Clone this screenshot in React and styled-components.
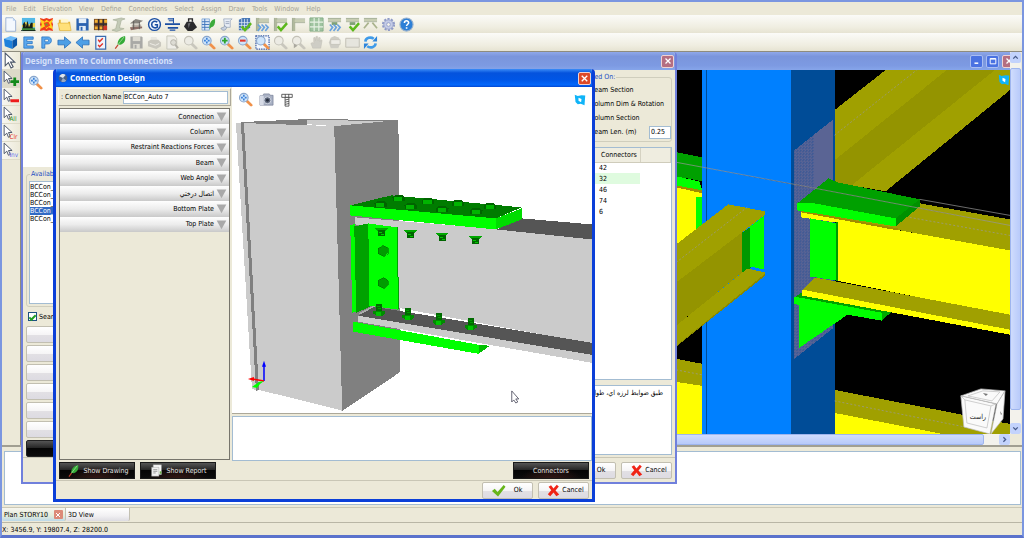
/*
 *
 * Connection designer workspace
 *
 */

import React from 'react';
import styled, { createGlobalStyle, css } from 'styled-components';

const GlobalStyle = createGlobalStyle`
  * {
    box-sizing: border-box;
  }
  body {
    margin: 0;
    color: #000;
    font: 7px/8px "DejaVu Sans Condensed", "Noto Sans", "DejaVu Sans", sans-serif;
  }
  button, input, textarea, table {
    font: inherit;
    color: inherit;
  }
`;

const MENU = ['File', 'Edit', 'Elevation', 'View', 'Define', 'Connections', 'Select', 'Assign', 'Draw', 'Tools', 'Window', 'Help'];

const FILE_TOOLS = [
  'new', 'city', 'map', 'open', 'save', 'stack', 'section', 'steel', 'grade', 'level', 'weight', 'export',
  'report', 'gridCheck', 'frameLoad', 'frameCheck', 'frame', 'mesh', 'jointLoad', 'jointCheck', 'joint', 'gear', 'help',
];

const VIEW_TOOLS = [
  'cube', 'letterE', 'letterP', 'next', 'prev', 'checklist', 'feather', 'saveGray', 'printGray', 'previewGray',
  'findGray', 'zoomAll', 'zoomIn', 'zoomOut', 'zoomWindow', 'findGray', 'zoomPrev', 'hand', 'handBox', 'box', 'refresh',
];

const POINTERS = ['pick', 'pickAdd', 'pickRemove', 'pickAll', 'pickClear', 'pickInvert'];

const SECTIONS = ['Connection', 'Column', 'Restraint Reactions Forces', 'Beam', 'Web Angle', 'اتصال درختي', 'Bottom Plate', 'Top Plate'];

const CONNECTORS = [42, 32, 46, 74, 6];

const lens = (fill, stroke, handle, mark) => (
  <g>
    <path d="M9.5 9.5l4.5 4.5" stroke={handle} strokeWidth="3" strokeLinecap="round" />
    <circle cx="6.2" cy="6" r="4.6" fill={fill} stroke={stroke} strokeWidth="1.2" />
    {mark}
  </g>
);
const blueLens = (mark) => lens('#cfe5fb', '#8aa6cc', '#f0914a', mark);
const grayLens = (mark) => lens('#ecebe4', '#c4c2b8', '#c9c7bd', mark);
const floppy = (body, label) => (
  <g>
    <path d="M1.5 1.5h12l1 1v12h-13z" fill={body} />
    <path d="M4 1.5h8v5H4z" fill={label} />
    <path d="M4.5 9.5h7v5h-7z" fill={label} />
    <path d="M6 10.5h2v4H6z" fill={body} />
  </g>
);
const check = <path d="M5 10l3.5 4L15 6.5" fill="none" stroke="#5cb81c" strokeWidth="2.6" />;
const frameBase = (
  <g>
    <path d="M3 1v14" stroke="#b1b99d" strokeWidth="3" />
    <path d="M4 4h11" stroke="#c7cdb2" strokeWidth="3" />
    <path d="M4 2h11M4 6h11M1.5 1v14" stroke="#8d987f" strokeWidth="0.7" />
  </g>
);
const jointBase = (
  <g>
    <path d="M1 3h14" stroke="#c7cdb2" strokeWidth="3" />
    <path d="M1 1.5h14M1 5h14" stroke="#8d987f" strokeWidth="0.7" />
    <path d="M5 5.5h6v3H5z" fill="#7fa276" />
  </g>
);
const waves = <path d="M3 8l3 3-3 4M7 8l3 3-3 4M11 8l3 3-3 4" fill="none" stroke="#69a2dd" strokeWidth="1.8" />;
const arrow = <path d="M3 1v12l3-3 2.5 5 2-1-2.5-4.500h4z" fill="#fff" stroke="#4a5568" strokeWidth="1" />;
const smallArrow = <path d="M2 1v10l2.500-2.400 1.600 3.900 1.700-.8-1.700-3.700h3.400z" fill="#fff" stroke="#4a5568" strokeWidth="0.9" />;
const iconText = (label, fill) => (
  <text x="7" y="14" fontSize="6" fill={fill}>{label}</text>
);

const DRAWINGS = {
  new: (
    <g>
      <path d="M3 .8h7.500l3 3.200v11.200H3z" fill="#f3f8fe" stroke="#8fa9cf" strokeWidth="0.9" />
      <path d="M10.500.8V4h3z" fill="#bcd3f0" />
    </g>
  ),
  city: (
    <g>
      <path d="M1 1h14v14H1z" fill="#53b9e6" />
      <path d="M1 9l4-4 3 3 7-2v5H1z" fill="#f0d44a" />
      <path d="M0 14h2V8l1.500-3L5 8v3l2-7 1.500 7 2-5h2v6l3 2v1H0z" fill="#152018" />
      <path d="M1 12h14v2H1z" fill="#3f8b3a" />
    </g>
  ),
  map: (
    <g>
      <path d="M1 1l4 1 3-1 3 1 4-1-1 4 1 3-1 4 1 3-4-1-3 1-3-1-4 1 1-4-1-3 1-4z" fill="#ef3b1d" />
      <path d="M1 2l5 3 2-2 3 2 4-3-2 5 2 6-5-2-2 2-2-3-5 3 2-5z" fill="#ffd21c" />
      <path d="M5 6l5-1 2 4-5 3z" fill="#f4441c" />
      <path d="M7 7h2v2H7z" fill="#4fae3d" />
    </g>
  ),
  open: (
    <g>
      <path d="M2 3h5l1.500 2H14v9H2z" fill="#e7b93c" />
      <path d="M4 1.500l8 1V9H4z" fill="#fff6cf" />
      <path d="M1 6.500h12.500l1.500 8H3z" fill="#ffe07a" stroke="#d9a72f" strokeWidth="0.6" />
    </g>
  ),
  save: floppy('#2b62b0', '#e3edf8'),
  stack: (
    <g>
      <path d="M1 2h14v12H1z" fill="#7b4d25" />
      <path d="M2 3h3v3H2zM7 3h3v3H7zM12 3h3v3h-3zM2 10h3v3H2zM7 10h3v3H7z" fill="#f4b234" />
      <path d="M1 7.500h14M6 2v12M11 2v12" stroke="#2f2a33" strokeWidth="1.300" />
      <path d="M11 9.500h4V14h-4z" fill="#d3382b" />
    </g>
  ),
  section: (
    <g>
      <path d="M2 3l9-2 4 1-4 1.500-2 8 5 1-8 3-5-1.500 4-1.500 2-8z" fill="#c3cab6" stroke="#a0a891" strokeWidth="0.6" />
    </g>
  ),
  steel: (
    <g>
      <path d="M1 7l6-5 8 2-5 3z" fill="#87847d" />
      <path d="M3 8h10v3H3z" fill="#b8b0a6" />
      <path d="M1 11l13-1v2L2 14z" fill="#8c6d66" />
      <path d="M5 4v9M11 5v8" stroke="#5d5a56" />
    </g>
  ),
  grade: (
    <g>
      <circle cx="8" cy="8" r="6.300" fill="#f5f8fd" stroke="#1c4fa2" strokeWidth="1.500" />
      <path d="M11 5.500C8.500 3.500 5 4.800 5 8s3.500 4.500 6 2.800V8.200H8.300" fill="none" stroke="#1c4fa2" strokeWidth="1.700" />
    </g>
  ),
  level: (
    <g stroke="#1c4fa2">
      <path d="M0 7.500h16M3 11.500h11" strokeWidth="1.800" />
      <path d="M3 2h6M5 14h6M9 1v6M4 4h5" strokeWidth="1.100" />
    </g>
  ),
  weight: (
    <g fill="#2a2a2c">
      <path d="M4 5h7l4 6-5 4H5l-4-5z" />
      <path d="M6 5V2h4v3" fill="none" stroke="#2a2a2c" strokeWidth="1.500" />
      <path d="M5 7l3-1-2 6z" fill="#67676b" />
    </g>
  ),
  export: (
    <g>
      <path d="M1 2h8v12H1z" fill="#dce8f7" stroke="#6d98cf" strokeWidth="0.700" />
      <path d="M1 5h8M1 8h8M1 11h8M4 2v12" stroke="#3f75bd" />
      <path d="M9 13c0-6 1-10 6-11 .5 5-1 8-4 9z" fill="#3cab3c" />
    </g>
  ),
  report: (
    <g>
      <path d="M5 2h9l-2 2v7H6z" fill="#e9eef6" stroke="#8c9bb3" strokeWidth="0.700" />
      <path d="M2 12c2-1 4-1 4-3l2 2c0 4-5 4-6 1z" fill="#c7d1e0" stroke="#7c8ba5" strokeWidth="0.700" />
      <path d="M7 5h4M7 7h4" stroke="#7c8ba5" strokeWidth="0.700" />
    </g>
  ),
  gridCheck: (
    <g>
      <path d="M2 3l4-2h8v10l-3 3H2z" fill="#4777b6" />
      <path d="M2 6h12M2 9h12M2 12h10M5 2v12M8 2v12M11 2v12" stroke="#e4ecf5" strokeWidth="0.800" />
      {check}
    </g>
  ),
  frameLoad: <g>{frameBase}{waves}</g>,
  frameCheck: <g>{frameBase}{check}</g>,
  frame: frameBase,
  mesh: (
    <g>
      <path d="M1 1h14v14H1z" fill="#9fc4a0" stroke="#85ad86" />
      <path d="M1 5.500h14M1 10.500h14M5.500 1v14M10.500 1v14" stroke="#e7f1e4" strokeWidth="1.200" />
    </g>
  ),
  jointLoad: <g>{jointBase}{waves}</g>,
  jointCheck: <g>{jointBase}{check}</g>,
  joint: (
    <g>
      <path d="M1 3h14" stroke="#c7cdb2" strokeWidth="3" />
      <path d="M1 1.500h14M1 5h14" stroke="#8d987f" strokeWidth="0.700" />
      <path d="M6 6l-5 6M10 6l5 6" stroke="#aab38d" strokeWidth="1.800" />
    </g>
  ),
  gear: (
    <g>
      <circle cx="8" cy="8" r="5.800" fill="none" stroke="#8f9ac6" strokeWidth="2.400" strokeDasharray="2.200 1.450" />
      <circle cx="8" cy="8" r="5" fill="#c4cbe6" stroke="#98a2cc" />
      <circle cx="8" cy="8" r="2" fill="#f4f3ea" stroke="#98a2cc" />
    </g>
  ),
  help: (
    <g>
      <circle cx="8" cy="8" r="7" fill="#2d7fd6" stroke="#9ab2cd" strokeWidth="1.200" />
      <path d="M5.800 6.300C5.800 3.300 10.300 3.400 10.300 6.100c0 1.600-2.200 1.700-2.200 3.500M8.100 11v1.600" fill="none" stroke="#fff" strokeWidth="1.700" />
    </g>
  ),
  cube: (
    <g>
      <path d="M1 4l7-3 7 2-5 3z" fill="#6ab9f8" />
      <path d="M1 4l9 2v9l-8-3z" fill="#1d80dc" />
      <path d="M10 6l5-3v8l-5 4z" fill="#0b55a8" />
    </g>
  ),
  letterE: <path d="M3 2h10v2.600H6.200v2.200H12v2.400H6.200v2.400H13V14H3z" fill="#5ba8ee" stroke="#2470c0" strokeWidth="0.800" />,
  letterP: <path d="M3 2h6.500c5 0 5 7.600 0 7.600H6.200V14H3zM6.200 4.500v2.800H9c1.500 0 1.500-2.800 0-2.800z" fill="#5ba8ee" fillRule="evenodd" stroke="#2470c0" strokeWidth="0.800" />,
  next: <path d="M1 5.500h7V2l7 6-7 6v-3.500H1z" fill="#4c9fe6" stroke="#2268b4" strokeWidth="0.800" />,
  prev: <path d="M15 5.500H8V2L1 8l7 6v-3.500h7z" fill="#4c9fe6" stroke="#2268b4" strokeWidth="0.800" />,
  checklist: (
    <g>
      <path d="M3 1.500h10.500v13.500H3z" fill="#eef4fb" stroke="#3a6cb0" strokeWidth="1.300" />
      <path d="M5.500 5l1.500 2 3.500-3.500M5.500 10.500l1.500 2 3.500-3.500" fill="none" stroke="#e03126" strokeWidth="1.500" />
    </g>
  ),
  feather: (
    <g>
      <path d="M7 10C7 5 10 2 15 1c1 5-1 8-5 9.500z" fill="#34ab38" />
      <path d="M7 11l3-4 4-5" fill="none" stroke="#a7dc9b" strokeWidth="0.900" />
      <path d="M4.500 14.500l3-4" stroke="#c0402c" strokeWidth="1.300" />
    </g>
  ),
  saveGray: floppy('#a9a9a6', '#dedcd3'),
  printGray: (
    <g>
      <path d="M4 2h6l2 5H4z" fill="#e9e8e1" />
      <path d="M1 7l3-2h8l3 3v4l-5 3-9-3z" fill="#c9c7be" />
      <path d="M3 9l6 2 4-2" fill="none" stroke="#efeee8" />
    </g>
  ),
  previewGray: (
    <g>
      <path d="M2 1h8l2.500 3v11H2z" fill="#efeee8" stroke="#c8c6bc" />
      <circle cx="9" cy="8" r="3" fill="#dddcd4" stroke="#b4b2a9" />
      <path d="M11 10.500l3 3.500" stroke="#b4b2a9" strokeWidth="2" />
    </g>
  ),
  findGray: grayLens(null),
  zoomAll: blueLens(<path d="M6.200 3v6M3.200 6h6" stroke="#3d82d8" strokeWidth="1.800" strokeDasharray="2 2" />),
  zoomIn: blueLens(<path d="M6.200 3v6M3.200 6h6" stroke="#2da52f" strokeWidth="2" />),
  zoomOut: blueLens(<path d="M3.200 6h6" stroke="#e2382e" strokeWidth="2.200" />),
  zoomWindow: (
    <g>
      <path d="M1 1h14v14H1z" fill="#f3f7fc" stroke="#3759a8" strokeWidth="1.300" strokeDasharray="1.500 1" />
      {blueLens(null)}
    </g>
  ),
  zoomPrev: grayLens(<path d="M3 14V9l4 2.500z" fill="#aaa89f" />),
  hand: <path d="M4 14l-2-5 1.500-1L5 9V3l1.500-.5L7 6l.5-4.500H9L9.500 6l1-3.500 1.500.5-.2 4 1-2 1.200.8L12.500 14z" fill="#cecdc5" stroke="#bebcb2" strokeWidth="0.500" />,
  handBox: (
    <g>
      <path d="M4 14L2 8l2-5 4-2 5 2 1 6-2 5z" fill="#cecdc5" />
      <path d="M4 5h10v5H4z" fill="#edece6" stroke="#bebcb2" strokeWidth="0.700" />
    </g>
  ),
  box: <path d="M.8 3.500h14.400v9.500H.8z" fill="#e6e5de" stroke="#c0beb4" />,
  refresh: (
    <g fill="none" stroke="#3f9be9" strokeWidth="2.800">
      <path d="M2.500 7C3 3 8 1.500 11.500 4" />
      <path d="M13.500 9c-.5 4-5.500 5.500-9 3" />
      <path d="M10 7h5V1zM6 9H1v6z" fill="#2d85db" stroke="none" />
    </g>
  ),
  pick: arrow,
  pickAdd: <g>{smallArrow}<path d="M12 7v8M8 11h8" stroke="#128a1a" strokeWidth="2.600" /></g>,
  pickRemove: <g>{smallArrow}<path d="M8 12h8" stroke="#ee1c1c" strokeWidth="2.800" /></g>,
  pickAll: <g>{smallArrow}{iconText('All', '#1c8a22')}</g>,
  pickClear: <g>{smallArrow}{iconText('Clr', '#e8372c')}</g>,
  pickInvert: <g>{smallArrow}{iconText('Inv', '#5b6cf0')}</g>,
  camera: (
    <g>
      <path d="M1 4h3l1-2h6l1 1.500h3V14H1z" fill="#a9b1c4" stroke="#737c92" strokeWidth="0.700" />
      <path d="M1 4h4v10H1z" fill="#d7dbe6" />
      <circle cx="9" cy="8.800" r="3.700" fill="#5c6579" stroke="#d2d7e3" />
      <circle cx="9" cy="8.800" r="1.500" fill="#242b3a" />
    </g>
  ),
  bolt: (
    <g fill="#fff" stroke="#3c3c3c" strokeWidth="0.900">
      <path d="M2 1.500h12V5H2zM6 1.500V5M10 1.500V5" />
      <path d="M5.800 5h4.400v10H5.800zM5.800 8l4.400-1M5.800 10.500l4.400-1M5.800 13l4.400-1" />
    </g>
  ),
  flag: (
    <g>
      <path d="M1 1l4 1.500 5-1 5 .5-1 13-5-2-4 .5-3-3z" fill="#10b4f8" />
      <path d="M6 5l4 1.500L9.500 11 6 9z" fill="#fff" />
    </g>
  ),
  tick: <path d="M1 8.500l3-2.500 3 3.500L13.500 2 15.500 4 7.500 14.500z" fill="#67b51b" />,
  cross: <path d="M2 3.500L5 1.500l3 4 4-4.500 2.500 2-4 5 4.500 5-3.500 2L8 10.500 4 15l-3-2.500 4.200-4.700z" fill="#f02416" />,
  close: <path d="M4 4l8 8M12 4l-8 8" stroke="#fff" strokeWidth="2" />,
  minimize: <path d="M4 11.500h6" stroke="#fff" strokeWidth="2.400" />,
  maximize: <path d="M3.500 4h9v8.500h-9zM3.500 5h9" fill="none" stroke="#fff" strokeWidth="1.500" />,
  up: <path d="M4 10l4-4 4 4" fill="none" stroke="#45598a" strokeWidth="2.300" />,
  down: <path d="M4 6l4 4 4-4" fill="none" stroke="#45598a" strokeWidth="2.300" />,
  right: <path d="M6 4l4 4-4 4" fill="none" stroke="#45598a" strokeWidth="2.300" />,
  triangle: <path d="M1 2h14L8 15z" fill="#a9a9a9" />,
  sphere: (
    <g>
      <circle cx="8" cy="8" r="7" fill="#46608a" />
      <path d="M2 5c3-4 8-4 10-2L8 8z" fill="#dfe5ee" />
      <path d="M8 8l5 4c-2 3-6 3-8 1z" fill="#9aa9c2" />
    </g>
  ),
  sheet: (
    <g>
      <path d="M4 1h10v12H4z" fill="#fdfdfd" stroke="#aaa" strokeWidth="0.600" />
      <path d="M2 4h9v11H2z" fill="#f1f1f1" stroke="#999" strokeWidth="0.600" />
      <path d="M4 7h5M4 9h5M4 11h3" stroke="#8a8a8a" />
      <path d="M12 9h2v3h-2z" fill="#66b145" />
    </g>
  ),
};

const Icon = ({ name, size = 15 }) => (
  <Glyph viewBox="0 0 16 16" width={size} height={size} fill="none" aria-hidden="true">
    {DRAWINGS[name]}
  </Glyph>
);

const HEADS = [[399, 198], [428, 201], [458, 203], [490, 206], [381, 204], [411, 206], [442, 209], [476, 211]];
const SHANKS = [[382, 229], [411, 231], [442, 234], [475, 237]];
const NUTS = [[380, 311], [409, 315], [439, 320], [471, 325]];

const ConnectionModel = () => (
  <ModelCanvas viewBox="233 88 359 325" preserveAspectRatio="xMaxYMax slice" role="img" aria-label="Connection model">
    <g shapeRendering="crispEdges">
      <path d="M237 124h6l16 267-6-2z" fill="#cbcbcb" />
      <path d="M242 123l66-3v6l-66-1z" fill="#808080" />
      <path d="M308 120l64 2 27 0-64 5-27-2z" fill="#cbcbcb" />
      <path d="M308 120l91 2" stroke="#808080" />
      <path d="M242 124h4l14 266-3 1z" fill="#808080" />
      <path d="M245 124l90 3 8 284-6-2-77-19z" fill="#cbcbcb" />
      <path d="M335 127l64-6 2 251-58 39z" fill="#808080" />
      <path d="M354 322l125 23v9l-125-22z" fill="#0f0" />
      <path d="M479 345l11 1-11 8z" fill="#00c000" />
      <path d="M356 218l146 12 90 9v105l-194-36-1-79-41-4z" fill="#cbcbcb" />
      <path d="M522 219l70 6v15l-95-10z" fill="#555" />
      <path d="M351 226l5-2 1 88-4 1z" fill="#0f0" />
      <path d="M355 227l14-3 2 83-14 6z" fill="#00a200" />
      <path d="M369 224l29 4 1 82-29-4z" fill="#0f0" />
      <path d="M398 228l1 81" stroke="#00a200" />
      <path d="M359 314l15-8 2 1-14 9z" fill="#aaa" />
      <path d="M359 316l16-9 217 36v13z" fill="#555" />
      <path d="M359 316l233 39v8l-233-41z" fill="#cbcbcb" />
      <path d="M351 206l41-10 130 12-26 11z" fill="#007c00" />
      <path d="M351 206l145 13v11l-145-14z" fill="#0f0" />
      <path d="M496 219l26-10v11l-26 10z" fill="#00dc00" />
      {[251, 283].map((y) => (
        <path key={y} d={`M379 ${y - 2}l5-3 5 3v4l-4 4-6-3z`} fill="#009c00" stroke="#006a00" strokeWidth="0.6" />
      ))}
      {HEADS.map(([x, y]) => (
        <g key={x}>
          <path d={`M${x - 6} ${y}l3-2h7l3 2-1 4h-11z`} fill="#006400" />
          <path d={`M${x - 4} ${y}h8v4h-8z`} fill="#00b400" />
        </g>
      ))}
      {SHANKS.map(([x, y]) => (
        <g key={x}>
          <path d={`M${x - 6} ${y}h13l-3 3h-7z`} fill="#00a800" />
          <path d={`M${x - 3} ${y + 2}h7v6h-7z`} fill="#006400" />
          <path d={`M${x - 2} ${y + 4}h3M${x} ${y + 6}h3`} stroke="#00c800" />
        </g>
      ))}
      {NUTS.map(([x, y]) => (
        <g key={x}>
          <path d={`M${x - 3} ${y - 7}h6v8h-6z`} fill="#006c00" />
          <path d={`M${x - 2} ${y - 4}h3M${x - 1} ${y - 2}h3`} stroke="#009c00" />
          <path d={`M${x - 6} ${y}h12v3l-3 2h-6l-3-2z`} fill="#008c00" />
          <path d={`M${x - 3} ${y + 1}h5v4h-5z`} fill="#00c400" />
        </g>
      ))}
    </g>
    <path d="M265 381v-16" stroke="#00f" strokeWidth="1.500" />
    <path d="M263 367l2-6 2 6z" fill="#00f" />
    <path d="M265 381l-12-2" stroke="#f00" strokeWidth="1.500" />
    <path d="M249 379l6-2v4z" fill="#f00" />
    <path d="M265 381l-5 1-7 5 5 1 3-4z" fill="#0f0" />
    <path d="M512 391v11l2-2 2 3 2-1-2-3h3z" fill="#fff" stroke="#445" strokeWidth="0.800" />
  </ModelCanvas>
);

const BuildingModel = () => (
  <ModelCanvas viewBox="677 70 333 363" preserveAspectRatio="xMaxYMin meet" role="img" aria-label="3D building view">
    <defs>
      <pattern id="hatch" width="3" height="3" patternUnits="userSpaceOnUse">
        <path d="M0 0h3v3H0z" fill="#5a6494" />
        <path d="M0 0h1v1H0zM2 1h1v1H2z" fill="#244f96" />
      </pattern>
    </defs>
    <g shapeRendering="crispEdges">
      <path d="M835 110l51-40h124v20L886 191l-51-9z" fill="#a0a000" />
      <path d="M835 160l112-90h48L852 185l-17-3z" fill="#949400" />
      <path d="M677 152l26 5v24l-26-5z" fill="#00a000" />
      <path d="M677 176l23 5 3 9-26-5z" fill="#0f0" />
      <path d="M677 185l26 5v3l-26-6z" fill="#a08c00" />
      <path d="M677 187l26 6v40l-26 12z" fill="#ff0" />
      <path d="M697 197h6v31l-6 4z" fill="#0f0" />
      <path d="M677 358l26 5v22l-26-4z" fill="#a0a000" />
      <path d="M677 381l26 4v48h-26z" fill="#ff0" />
      <path d="M703 70h89v363h-89z" fill="#0080ff" />
      <path d="M792 70h43v363h-43z" fill="#004c97" />
      <path d="M707.500 70v363" stroke="#004c97" />
      <path d="M795 150l38-30v208l-38 30z" fill="url(#hatch)" />
      <path d="M815 134l18-14v60l-18 12z" fill="#5a6494" />
      <path d="M677 244l52-40 37 7v3l-89 69z" fill="#a0a000" />
      <path d="M677 282l67-51v40l-67 54z" fill="#949400" />
      <path d="M743 232l9-6v41l-9 5z" fill="#009800" />
      <path d="M751 226l14-11v54l-14-3z" fill="#0f0" />
      <path d="M677 325l71-57 18 4v3l-89 71z" fill="#a0a000" />
      <path d="M677 345l89-72v2l-89 71z" fill="#888800" />
      <path d="M802 212l118-9 90 16v31z" fill="#a0a000" />
      <path d="M802 212l98 18 110 20v65l-173-35-1-58-34-5z" fill="#ff0" />
      <path d="M802 211l96 18" stroke="#a08c00" strokeWidth="2" />
      <path d="M811 218l26 5v57l-26-4z" fill="#0f0" />
      <path d="M837 222v58" stroke="#009800" strokeWidth="2" />
      <path d="M795 297l7-5 92 18-12 3z" fill="#00a000" />
      <path d="M803 289l13-12 194 37v16z" fill="#a0a000" />
      <path d="M803 289l207 40v5l-207-39z" fill="#ff0" />
      <path d="M795 296l87 16v8l-34-6-48 33v-42l-5-2z" fill="#0f0" />
      <path d="M882 312l10-1-10 9z" fill="#00a800" />
      <path d="M798 203l31-25 9 4 82 17-24 19z" fill="#00a000" />
      <path d="M798 203h17l81 15v8l-98-16z" fill="#0f0" />
      <path d="M896 218l24-19v7l-24 20z" fill="#009000" />
      <path d="M835 389l175 34v10H835z" fill="#a0a000" />
      <path d="M835 412l108 21H835z" fill="#ff0" />
    </g>
    <g stroke="#999" strokeWidth="0.700">
      <path d="M677 162l123 23 210 40M920 199l90 16" />
      <path d="M677 262l72-56M835 135l82-65M910 217l100 18M835 400l155 31M677 369l26 5" strokeDasharray="2 2" />
    </g>
    <g fill="#fafafa" stroke="#bbb" strokeWidth="0.700">
      <path d="M961 395l20-7 24 2-8 13z" />
      <path d="M961 395l35 8-6 30-26-7z" />
      <path d="M997 403l8-13-2 28-12 15z" />
      <path d="M965 399l26 6-4 22-20-5zM961 395l4 4M991 405l5-2M968 395l15-5 17 1-8 9z" fill="none" />
    </g>
    <text x="978" y="418" textAnchor="middle" fontSize="7" fill="#222">راست</text>
    <path d="M983 392l5 1-2 2zM1000 410l2 3-1 1z" fill="#777" />
  </ModelCanvas>
);

const ToolRow = ({ names, label }) => (
  <Toolbar aria-label={label}>
    {names.map((name, i) => (
      <ToolButton key={`${name}-${i}`} type="button" aria-label={name}><Icon name={name} /></ToolButton>
    ))}
  </Toolbar>
);

const DialogButtons = () => (
  <React.Fragment>
    <PushButton type="button"><Icon name="tick" /><span>Ok</span></PushButton>
    <PushButton type="button"><Icon name="cross" size={13} /><span>Cancel</span></PushButton>
  </React.Fragment>
);

const BeamToColumnWindow = () => (
  <DesignWindow>
    <TitleBar>
      <Title>Design Beam To Column Connections</Title>
      <CaptionButton type="button" aria-label="Close design" $tone="faded"><Icon name="close" size={10} /></CaptionButton>
    </TitleBar>
    <DesignBody>
      <ListPane>
        <Preview><Icon name="zoomAll" /></Preview>
        <AvailableGroup>
          <Legend>Available</Legend>
          <ConnectionList>
            {[1, 2, 3, 4, 5].map((n) => (
              <ConnectionItem key={n} $selected={n === 4}>BCCon_Auto</ConnectionItem>
            ))}
          </ConnectionList>
        </AvailableGroup>
        <SearchLabel>
          <CheckBox type="checkbox" defaultChecked />
          Search
        </SearchLabel>
        <ActionStack>
          {[1, 2, 3, 4, 5, 6].map((n) => <ActionButton key={n} type="button" aria-label={`Action ${n}`} />)}
          <ActionButton type="button" aria-label="Design" $dark />
        </ActionStack>
      </ListPane>
      <OptionPane>
        <BasedOnGroup>
          <Legend>Based On:</Legend>
          <Option>Beam Section</Option>
          <Option>Column Dim &amp; Rotation</Option>
          <Option>Column Section</Option>
          <Option>
            <label htmlFor="beam-len">Beam Len. (m)</label>
            <LengthInput id="beam-len" defaultValue="0.25" />
          </Option>
        </BasedOnGroup>
        <TableFrame>
          <ConnectorTable>
            <thead>
              <tr><th>Connectors</th><th aria-label="Notes" /></tr>
            </thead>
            <tbody>
              {CONNECTORS.map((count) => (
                <ConnectorRow key={count} $selected={count === 32}><td>{count}</td><td /></ConnectorRow>
              ))}
            </tbody>
          </ConnectorTable>
        </TableFrame>
        <Notes dir="rtl" aria-label="Notes" readOnly value="طبق ضوابط لرزه اي، طول" />
      </OptionPane>
    </DesignBody>
    <DesignFooter><DialogButtons /></DesignFooter>
  </DesignWindow>
);

const ConnectionDialog = () => (
  <Dialog role="dialog" aria-label="Connection Design">
    <TitleBar $active>
      <Icon name="sphere" size={10} />
      <Title $active>Connection Design</Title>
      <CaptionButton type="button" aria-label="Close dialog" $tone="red"><Icon name="close" size={11} /></CaptionButton>
    </TitleBar>
    <DialogBody>
      <PropertyPane>
        <NameRow>
          <label htmlFor="connection-name">: Connection Name</label>
          <NameInput id="connection-name" defaultValue="BCCon_Auto 7" />
        </NameRow>
        <Accordion>
          <AccordionRows>
            {SECTIONS.map((section) => (
              <AccordionHeader key={section} type="button">
                {section}
                <Icon name="triangle" size={11} />
              </AccordionHeader>
            ))}
          </AccordionRows>
        </Accordion>
      </PropertyPane>
      <ModelPane>
        <ModelView>
          <ConnectionModel />
          <ModelTools>
            <ToolButton type="button" aria-label="Zoom all"><Icon name="zoomAll" /></ToolButton>
            <ToolButton type="button" aria-label="Snapshot"><Icon name="camera" /></ToolButton>
            <ToolButton type="button" aria-label="Bolts"><Icon name="bolt" size={14} /></ToolButton>
            <FlagMark><Icon name="flag" size={12} /></FlagMark>
          </ModelTools>
        </ModelView>
        <MessageBox aria-label="Messages" readOnly />
      </ModelPane>
    </DialogBody>
    <ReportBar>
      <DarkButton type="button"><Icon name="feather" size={14} />Show Drawing</DarkButton>
      <DarkButton type="button"><Icon name="sheet" size={13} />Show Report</DarkButton>
      <DarkButton type="button" $end>Connectors</DarkButton>
    </ReportBar>
    <DialogFooter><DialogButtons /></DialogFooter>
  </Dialog>
);

const App = () => (
  <Shell>
    <GlobalStyle />
    <MenuBar>
      {MENU.map((item) => <MenuItem key={item} type="button">{item}</MenuItem>)}
    </MenuBar>
    <ToolRow names={FILE_TOOLS} label="File tools" />
    <ToolRow names={VIEW_TOOLS} label="View tools" />
    <Workspace>
      <PointerBar>
        {POINTERS.map((name) => (
          <PointerButton key={name} type="button" aria-label={name} $pressed={name === 'pickAdd'}>
            <Icon name={name} size={17} />
          </PointerButton>
        ))}
      </PointerBar>
      <MdiArea>
        <MdiColumn>
          <TitleBar>
            <CaptionGroup>
              <CaptionButton type="button" aria-label="Minimize"><Icon name="minimize" size={10} /></CaptionButton>
              <CaptionButton type="button" aria-label="Maximize"><Icon name="maximize" size={10} /></CaptionButton>
              <CaptionButton type="button" aria-label="Close view" $tone="faded"><Icon name="close" size={10} /></CaptionButton>
            </CaptionGroup>
          </TitleBar>
          <Scene>
            <BuildingModel />
            <SceneFlag><Icon name="flag" size={12} /></SceneFlag>
          </Scene>
          <HorizontalScroll>
            <HorizontalThumb />
            <ScrollArrow type="button" aria-label="Scroll right"><Icon name="right" size={9} /></ScrollArrow>
          </HorizontalScroll>
        </MdiColumn>
        <VerticalScroll>
          <ScrollArrow type="button" aria-label="Scroll up"><Icon name="up" size={9} /></ScrollArrow>
          <VerticalThumb />
          <ScrollArrow type="button" aria-label="Scroll down"><Icon name="down" size={9} /></ScrollArrow>
        </VerticalScroll>
      </MdiArea>
    </Workspace>
    <OutputArea><Output aria-label="Output" readOnly /></OutputArea>
    <TabBar>
      <Tab $active>
        <TabLink href="#plan">Plan STORY10</TabLink>
        <TabClose type="button" aria-label="Close tab"><Icon name="close" size={8} /></TabClose>
      </Tab>
      <Tab><TabLink href="#view">3D View</TabLink></Tab>
    </TabBar>
    <StatusBar>X: 3456.9, Y: 19807.4, Z: 28200.0</StatusBar>
    <BeamToColumnWindow />
    <ConnectionDialog />
  </Shell>
);

const plainButton = css`
  display: flex;
  align-items: center;
  padding: 0;
  border: 0;
  background: none;
`;

const Glyph = styled.svg`
  display: block;
  flex: none;
`;

const Shell = styled.main`
  position: relative;
  display: flex;
  flex-direction: column;
  min-height: 100vh;
  overflow: hidden;
  border: 2px solid #7b96e0;
  border-bottom: 3px solid #5a72cc;
  background: #ece9d8;
`;

const MenuBar = styled.nav`
  display: flex;
  gap: 7px;
  height: 13px;
  padding-left: 4px;
`;

const MenuItem = styled.button`
  ${plainButton}
  color: #a5a396;
`;

const Toolbar = styled.div`
  display: flex;
  align-items: center;
  gap: 3px;
  height: 18px;
  padding-left: 1px;
  background: linear-gradient(#fbfbf8, #efede0 70%, #e6e3d2);
`;

const ToolButton = styled.button`
  ${plainButton}
`;

const Workspace = styled.div`
  display: flex;
  flex: 1;
  border-top: 1px solid #8e8c7e;
  border-bottom: 2px solid #a19f92;
`;

const PointerBar = styled.div`
  width: 19px;
  border-right: 1px solid #8e8c7e;
`;

const PointerButton = styled.button`
  ${plainButton}
  align-items: flex-start;
  width: 100%;
  height: 18px;
  border-bottom: 1px solid #dedbc9;
  background: ${(props) => (props.$pressed ? '#dcdac9' : 'linear-gradient(90deg, #f8f7f1, #ece9d8)')};
`;

const MdiArea = styled.div`
  display: flex;
  flex: 1;
  min-width: 0;
  padding-right: 1px;
`;

const MdiColumn = styled.div`
  display: flex;
  flex: 1;
  flex-direction: column;
  min-width: 0;
  overflow: hidden;
`;

const TitleBar = styled.header`
  display: flex;
  flex: none;
  align-items: center;
  gap: 2px;
  height: 18px;
  padding-left: 2px;
  background: ${(props) => (props.$active
    ? 'linear-gradient(#3b8cf8, #0453dd 22%, #0056e6 60%, #0468fb 88%, #0347d0)'
    : 'linear-gradient(#8fa8ea, #7a95dc 25%, #7d9ae2 75%, #86a5ea)')};
`;

const Title = styled.h1`
  flex: 1;
  margin: 0;
  color: ${(props) => (props.$active ? '#fff' : '#d6e1fa')};
  font: bold 8px/10px "Noto Sans", "Liberation Sans", sans-serif;
`;

const CaptionGroup = styled.div`
  display: flex;
  flex: 1;
  gap: 2px;
  justify-content: flex-end;
  margin-right: -6px;
`;

const captionTones = { red: '#dd4a29', faded: '#b46e82' };

const CaptionButton = styled.button`
  ${plainButton}
  flex: none;
  justify-content: center;
  width: 13px;
  height: 13px;
  margin-right: 1px;
  border: 1px solid ${(props) => (props.$tone ? '#f0d2d2' : '#a9bdf2')};
  border-radius: 2px;
  background: ${(props) => captionTones[props.$tone] || '#4a72e2'};
`;

const Scene = styled.div`
  position: relative;
  flex: 1;
  background: #000;
`;

const ModelCanvas = styled.svg`
  position: absolute;
  inset: 0;
  width: 100%;
  height: 100%;
`;

const SceneFlag = styled.span`
  position: absolute;
  top: 4px;
  right: 0;
`;

const HorizontalScroll = styled.div`
  display: flex;
  justify-content: space-between;
  height: 11px;
  background: #f3f2ec;
`;

const HorizontalThumb = styled.div`
  flex: 1;
  margin-right: 15px;
  border: 1px solid #9eb5ee;
  border-radius: 2px;
  background: linear-gradient(#cfdcfd, #b8cafa);
`;

const VerticalScroll = styled.div`
  display: flex;
  flex-direction: column;
  width: 11px;
  margin-bottom: 11px;
  background: #f3f2ec;
`;

const VerticalThumb = styled.div`
  flex: 1;
  margin: 5px 0 13px;
  border: 1px solid #9eb5ee;
  border-radius: 2px;
  background: linear-gradient(90deg, #cfdcfd, #b8cafa);
`;

const ScrollArrow = styled.button`
  ${plainButton}
  justify-content: center;
  width: 11px;
  height: 11px;
  border-radius: 2px;
  background: #c3d3fc;
`;

const OutputArea = styled.div`
  display: flex;
  height: 60px;
  padding: 4px 1px 2px 2px;
`;

const textBox = css`
  margin: 0;
  border: 1px solid #a3bcd2;
  outline: 0;
  background: #fff;
  resize: none;
`;

const Output = styled.textarea`
  ${textBox}
  flex: 1;
`;

const TabBar = styled.div`
  display: flex;
  height: 16px;
  padding-bottom: 1px;
  border-top: 1px solid #cbc8b6;
  border-bottom: 1px solid #b9b6a5;
`;

const Tab = styled.div`
  display: flex;
  align-items: center;
  gap: 6px;
  width: 64px;
  padding-left: 2px;
  border-right: 1px solid #c3c0b2;
  border-radius: 0 0 2px 2px;
  background: ${(props) => (props.$active
    ? 'linear-gradient(#f6f5ee, #e4ecd9 60%, #bcd9ea)'
    : 'linear-gradient(#fff, #f1f0f2 60%, #dddce2)')};
`;

const TabLink = styled.a`
  color: #000;
  text-decoration: none;
  white-space: nowrap;
`;

const TabClose = styled.button`
  ${plainButton}
  justify-content: center;
  width: 9px;
  height: 9px;
  border-radius: 1px;
  background: #dc8a78;
`;

const StatusBar = styled.footer`
  height: 12px;
  padding-top: 3px;
`;

const DesignWindow = styled.section`
  position: absolute;
  top: 50px;
  left: 19px;
  display: flex;
  flex-direction: column;
  width: 656px;
  height: 432px;
  border: 2px solid #7080dc;
  border-top: 0;
  border-radius: 4px 4px 0 0;
  background: #ece9d8;
  overflow: hidden;
`;

const DesignBody = styled.div`
  display: flex;
  flex: 1;
  min-height: 0;
`;

const ListPane = styled.div`
  display: flex;
  flex: 1;
  flex-direction: column;
`;

const Preview = styled.div`
  height: 99px;
  padding: 5px;
  background: #fff;
`;

const group = css`
  min-width: 0;
  margin: 0;
  padding: 0;
  border: 1px solid #d0cebd;
  border-radius: 3px;
`;

const Legend = styled.legend`
  padding: 0 1px;
  color: #1c4fc4;
`;

const AvailableGroup = styled.fieldset`
  ${group}
  height: 137px;
  margin: 3px 2px 0 3px;
  padding: 3px 2px;

  legend {
    margin-left: 1px;
  }
`;

const ConnectionList = styled.ul`
  height: 123px;
  margin: 0;
  padding: 1px 0;
  border: 1px solid #a3bcd2;
  background: #fff;
  list-style: none;
`;

const ConnectionItem = styled.li`
  color: ${(props) => (props.$selected ? '#fff' : '#000')};
  background: ${(props) => (props.$selected ? '#316ac5' : 'none')};
`;

const SearchLabel = styled.label`
  display: flex;
  align-items: center;
  gap: 2px;
  margin: 5px;
`;

const CheckBox = styled.input`
  display: grid;
  place-items: center;
  width: 9px;
  height: 9px;
  margin: 0;
  border: 1px solid #1d5281;
  background: #fff;
  appearance: none;

  &:checked::after {
    width: 5px;
    height: 2px;
    border: solid #21a121;
    border-width: 0 0 2px 2px;
    content: '';
    transform: rotate(-45deg);
  }
`;

const ActionStack = styled.div`
  display: grid;
  gap: 2px;
  padding: 0 3px;
`;

const lightFace = 'linear-gradient(#fff, #f6f5f6 50%, #e2e0e4 55%, #dddbe2)';
const darkFace = 'radial-gradient(ellipse at 50% 120%, #3a1a16, transparent 60%), linear-gradient(#555, #262626 45%, #050505 50%, #0c0c0c)';

const ActionButton = styled.button`
  height: 17px;
  border: 1px solid ${(props) => (props.$dark ? '#222' : '#c2bfb1')};
  border-radius: 2px;
  background: ${(props) => (props.$dark ? darkFace : lightFace)};
`;

const OptionPane = styled.div`
  display: flex;
  flex: none;
  flex-direction: column;
  gap: 5px;
  width: 142px;
  padding: 3px 3px 2px 0;
`;

const BasedOnGroup = styled.fieldset`
  ${group}
  height: 69px;
  padding: 2px 0 0 56px;

  legend {
    margin-left: -8px;
  }
`;

const Option = styled.div`
  display: flex;
  align-items: center;
  justify-content: space-between;
  height: 14px;
  white-space: nowrap;
`;

const LengthInput = styled.input`
  ${textBox}
  width: 22px;
  height: 13px;
  padding: 0 1px;
`;

const TableFrame = styled.div`
  flex: 1;
  border: 1px solid #a3bcd2;
  background: #fff;
`;

const ConnectorTable = styled.table`
  width: 100%;
  border-collapse: collapse;
  table-layout: fixed;

  th, td {
    height: 11px;
    padding: 0 0 0 65px;
    font-weight: normal;
    text-align: left;
  }
  th {
    height: 14px;
    padding-left: 67px;
    border-right: 1px solid #d5d2c2;
    border-bottom: 1px solid #cfccbb;
    background: #efede0;
  }
  th:first-child {
    width: 106px;
  }
  th:last-child, td:last-child {
    padding: 0;
  }
`;

const ConnectorRow = styled.tr`
  td:first-child {
    background: ${(props) => (props.$selected ? '#dffbdf' : '#fff')};
  }
`;

const Notes = styled.textarea`
  ${textBox}
  height: 70px;
  padding: 3px 8px;
`;

const footer = css`
  display: flex;
  flex: none;
  align-items: center;
  justify-content: flex-end;
  border-top: 1px solid #c9c6b5;
`;

const DesignFooter = styled.footer`
  ${footer}
  gap: 5px;
  height: 25px;
  padding-right: 3px;
`;

const PushButton = styled.button`
  ${plainButton}
  width: 51px;
  height: 17px;
  padding: 0 2px 0 8px;
  border: 1px solid #c2bfb1;
  border-radius: 2px;
  background: ${lightFace};

  span {
    flex: 1;
    text-align: center;
  }
`;

const Dialog = styled.section`
  position: absolute;
  top: 67px;
  left: 51px;
  display: flex;
  flex-direction: column;
  width: 542px;
  height: 433px;
  border: 3px solid #0b3fd8;
  border-top: 0;
  border-radius: 4px 4px 0 0;
  background: #ece9d8;
  overflow: hidden;
`;

const DialogBody = styled.div`
  display: flex;
  flex: 1;
  min-height: 0;
`;

const PropertyPane = styled.div`
  display: flex;
  flex: none;
  flex-direction: column;
  gap: 2px;
  width: 176px;
  padding: 1px 1px 1px 2px;
`;

const NameRow = styled.div`
  display: flex;
  align-items: center;
  justify-content: space-between;
  height: 18px;
  padding: 0 2px;
  border: 1px solid #f8f7f0;
  border-right-color: #aca899;
  border-bottom-color: #aca899;
  white-space: nowrap;
`;

const NameInput = styled.input`
  ${textBox}
  width: 105px;
  height: 13px;
  padding: 0;
`;

const Accordion = styled.div`
  flex: 1;
  margin: 0 1px;
  border: 1px solid #77756c;
`;

const AccordionRows = styled.div`
  display: grid;
  grid-auto-rows: 1fr;
  height: 123px;
`;

const AccordionHeader = styled.button`
  ${plainButton}
  gap: 2px;
  justify-content: flex-end;
  padding-right: 2px;
  background: linear-gradient(#fefefe, #ececec 50%, #c9c9c9);
`;

const ModelPane = styled.div`
  display: flex;
  flex: 1;
  flex-direction: column;
  gap: 2px;
`;

const ModelView = styled.div`
  position: relative;
  flex: 1;
  border-bottom: 1px solid #aca899;
  background: #fff;
`;

const ModelTools = styled.div`
  position: relative;
  display: flex;
  align-items: center;
  gap: 6px;
  padding: 5px 6px;
`;

const FlagMark = styled.span`
  margin-left: auto;
`;

const MessageBox = styled.textarea`
  ${textBox}
  height: 45px;
`;

const ReportBar = styled.div`
  display: flex;
  flex: none;
  align-items: center;
  gap: 5px;
  height: 19px;
  padding: 0 3px;
`;

const DarkButton = styled.button`
  ${plainButton}
  gap: 4px;
  justify-content: center;
  width: 76px;
  height: 17px;
  margin-left: ${(props) => (props.$end ? 'auto' : '0')};
  border: 1px solid #1a1a1a;
  color: #e4e4e4;
  background: ${darkFace};
`;

const DialogFooter = styled.footer`
  ${footer}
  gap: 5px;
  height: 19px;
  padding-right: 3px;
`;

export default App;
